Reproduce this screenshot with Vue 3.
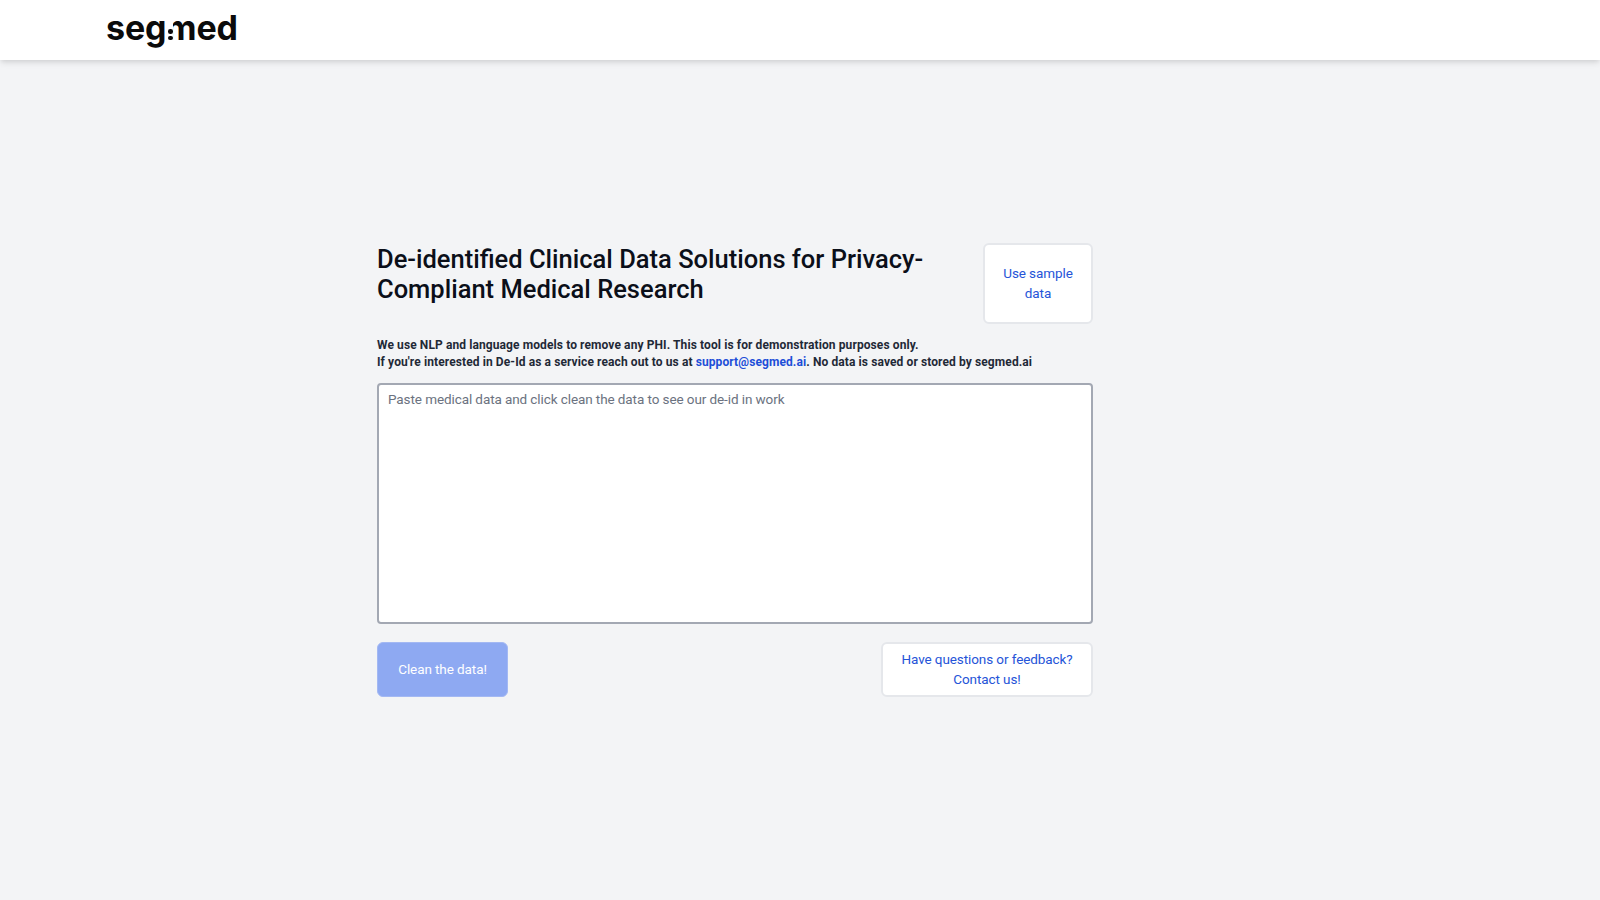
<template>
  <div class="page">
    <!-- Top bar -->
    <header class="topbar">
      <div class="logo" aria-label="segmed">seg<span class="logo-m"><i class="stem"><b></b><b></b></i>med</span></div>
    </header>

    <main class="main">
      <div class="panel">
        <div class="title-row">
          <h1 class="title">De-identified Clinical Data Solutions for Privacy-Compliant Medical Research</h1>
          <button class="btn-outline btn-sample">Use sample data</button>
        </div>

        <p class="intro">
          We use NLP and language models to remove any PHI. This tool is for demonstration purposes only.<br />
          If you're interested in De-Id as a service reach out to us at
          <a href="#" class="mail">support@segmed.ai</a>. No data is saved or stored by segmed.ai
        </p>

        <textarea
          v-model="text"
          class="input"
          placeholder="Paste medical data and click clean the data to see our de-id in work"
        ></textarea>

        <div class="actions">
          <button class="btn-primary" disabled>Clean the data!</button>
          <button class="btn-outline btn-contact">Have questions or feedback? Contact us!</button>
        </div>
      </div>
    </main>
  </div>
</template>

<script setup>
import { ref } from 'vue';

const text = ref('');
</script>

<style>
body {
  margin: 0;
  background: #f3f4f6;
}
</style>

<style scoped>
.page {
  min-height: 900px;
  background: #f3f4f6;
  font-family: Roboto, "Noto Sans", sans-serif;
  color: #111827;
}

.topbar {
  height: 60px;
  padding-left: 106px;
  display: flex;
  align-items: center;
  background: #fff;
  box-shadow: 0 4px 6px -1px rgba(0, 0, 0, 0.1), 0 2px 4px -1px rgba(0, 0, 0, 0.06);
}

.logo {
  font-family: Inter, sans-serif;
  font-size: 34px;
  font-weight: 700;
  line-height: 40px;
  letter-spacing: -0.1px;
  color: #0b0b0b;
  margin-top: -4px;
}

.logo-m {
  position: relative;
  margin-left: -1px;
}

/* the m's left stem is two dots in the wordmark */
.stem {
  position: absolute;
  left: 0;
  bottom: 8px;
  width: 8px;
  height: 20px;
  background: #fff;
}

.stem b {
  position: absolute;
  left: 3px;
  width: 4.5px;
  height: 4.5px;
  border-radius: 50%;
  background: #0b0b0b;
}

.stem b:first-child {
  top: 9px;
}

.stem b:last-child {
  bottom: 0;
}

.main {
  padding: 183px 0 0 377px;
}

.panel {
  width: 716px;
}

.title-row {
  display: flex;
  justify-content: space-between;
  align-items: flex-start;
}

.title {
  width: 560px;
  margin: 1px 0 0;
  font-size: 25.5px;
  line-height: 30px;
  font-weight: 500;
  color: #0b0f19;
}

.btn-outline {
  background: #fff;
  border: 2px solid #e5e7eb;
  border-radius: 6px;
  color: #2554d8;
  font: inherit;
  font-size: 13.5px;
  letter-spacing: -0.09px;
  line-height: 20px;
  padding: 0 0 2px;
}

.btn-sample {
  width: 110px;
  height: 81px;
  padding: 0 14px 2px;
}

.intro {
  margin: 13px 0 0;
  font-size: 12px;
  letter-spacing: 0.1px;
  line-height: 16.5px;
  font-weight: 700;
  color: #1f2937;
}

.mail {
  color: #1d4ed8;
  text-decoration: none;
}

.input {
  display: block;
  box-sizing: border-box;
  width: 100%;
  height: 241px;
  margin-top: 13px;
  padding: 4px 9px;
  background: #fff;
  border: 2px solid #a3a8b3;
  border-radius: 4px;
  font: inherit;
  font-size: 13.5px;
  letter-spacing: -0.09px;
  line-height: 20px;
  resize: none;
  outline: none;
}

.input::placeholder {
  color: #6b7280;
}

.actions {
  display: flex;
  justify-content: space-between;
  margin-top: 18px;
}

.btn-primary {
  width: 131px;
  height: 55px;
  padding: 0 0 2px;
  background: #8ea9f2;
  border: 1px solid #a3b8f3;
  border-radius: 6px;
  color: #fff;
  font: inherit;
  font-size: 13.5px;
  letter-spacing: -0.09px;
}

.btn-contact {
  width: 212px;
  height: 55px;
  padding: 0 16px 2px;
}
</style>
